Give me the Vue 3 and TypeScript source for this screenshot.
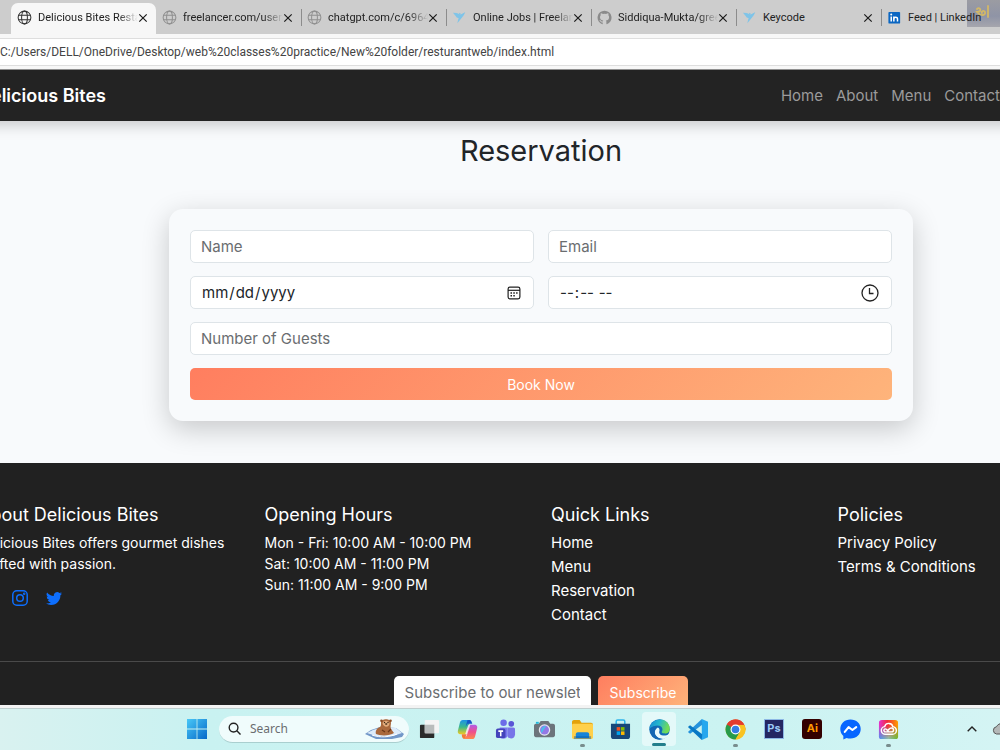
<script setup lang="ts">
import { ref } from 'vue'

interface Tab {
  title: string
  icon: 'globe' | 'bird' | 'github' | 'linkedin'
  closable: boolean
}

const tabs: Tab[] = [
  { title: 'Delicious Bites Resta', icon: 'globe', closable: true },
  { title: 'freelancer.com/users', icon: 'globe', closable: true },
  { title: 'chatgpt.com/c/69646', icon: 'globe', closable: true },
  { title: 'Online Jobs | Freelan', icon: 'bird', closable: true },
  { title: 'Siddiqua-Mukta/gree', icon: 'github', closable: true },
  { title: 'Keycode', icon: 'bird', closable: true },
  { title: 'Feed | LinkedIn', icon: 'linkedin', closable: false },
]

const navLinks = ['Home', 'About', 'Menu', 'Contact']
const quickLinks = ['Home', 'Menu', 'Reservation', 'Contact']
const policies = ['Privacy Policy', 'Terms & Conditions']
const hours = ['Mon - Fri: 10:00 AM - 10:00 PM', 'Sat: 10:00 AM - 11:00 PM', 'Sun: 11:00 AM - 9:00 PM']

const activeTab = ref(0)
const name = ref('')
const email = ref('')
const date = ref('')
const time = ref('')
const guests = ref('')
const newsletter = ref('')
const search = ref('')
</script>

<template>
  <div class="desktop">
    <header class="browser">
      <div class="tabs">
        <div class="keyboard-widget">
          <svg viewBox="0 0 16 16" fill="none" stroke="#d3b866" stroke-width="1.8" stroke-linecap="round">
            <path d="M2 5c2-2 4 0 3 2-1 1-3 1-3 1 4 5 9 3 8 0-1-2-4-1-3 1M13 2v11" />
          </svg>
        </div>
        <div v-for="(tab, i) in tabs" :key="i" class="tab" :class="{ active: i === activeTab, ruled: i > 1 }">
          <button class="tab-main" type="button" @click="activeTab = i">
            <svg v-if="tab.icon === 'globe'" class="fav" viewBox="0 0 16 16" fill="none" stroke="currentColor" stroke-width="1.1">
              <circle cx="8" cy="8" r="6.8" /><ellipse cx="8" cy="8" rx="3.1" ry="6.8" /><path d="M1.7 5.6h12.6M1.7 10.4h12.6" />
            </svg>
            <svg v-else-if="tab.icon === 'bird'" class="fav" viewBox="0 0 16 16" fill="#7fc4e8">
              <path d="M1 3l4 .3 2.6 3.2L5.2 8zM7.3 3l2 .8-.7 2.5zM14 2.5l-1.3 2.8-2 2.6-5 6.1 1-4.3L9.3 5z" /><path d="M5 3.300l4.300 1.700 4.700-2.500-6 6.500-2.800-1z" />
            </svg>
            <svg v-else-if="tab.icon === 'github'" class="fav" viewBox="0 0 16 16" fill="#8b8b8b">
              <path d="M8 .7a7.4 7.4 0 0 0-2.4 14.4c.4.1.5-.2.5-.4v-1.5c-2 .4-2.6-.9-2.7-1.4-.2-.3-.5-.8-.8-1 .7-.3 1.4.2 1.8.9.5.8 1.2.7 1.8.5.1-.5.3-.8.5-1-1.8-.2-3.5-.9-3.5-3.6 0-.9.3-1.6.8-2.1-.1-.3-.3-1 .1-2 0 0 .8-.2 2.1.8a7 7 0 0 1 3.7 0c1.3-1 2.1-.8 2.1-.8.4 1 .2 1.7.1 2 .5.5.8 1.2.8 2.1 0 2.7-1.7 3.4-3.5 3.6.4.3.6.8.6 1.5v2c0 .2.1.5.5.4A7.4 7.4 0 0 0 8 .7z" />
            </svg>
            <svg v-else class="fav" viewBox="0 0 16 16">
              <rect x="1.5" y="2" width="12.5" height="12.5" rx="1" fill="#0a66c2" />
              <path d="M4.5 7v5.2M7.3 7v5.2M7.3 9.6c0-2.4 3.9-2.6 3.9 0v2.6" stroke="#fff" stroke-width="1.6" fill="none" />
              <circle cx="4.5" cy="4.7" r="1.1" fill="#fff" />
            </svg>
            <span class="tab-title" :class="{ faded: tab.title.length > 15 }">{{ tab.title }}</span>
          </button>
          <button v-if="tab.closable" class="close" type="button" aria-label="Close tab">
            <svg viewBox="0 0 10 10" stroke="#1a1a1a" stroke-width="1.2"><path d="M1.3 1.3l7.4 7.4M8.7 1.3L1.3 8.7" /></svg>
          </button>
        </div>
      </div>
      <div class="address">C:/Users/DELL/OneDrive/Desktop/web%20classes%20practice/New%20folder/resturantweb/index.html</div>
    </header>

    <main class="viewport">
      <div class="site">
        <nav class="navbar">
          <a class="brand" href="#home">Delicious Bites</a>
          <div class="nav-links">
            <a v-for="link in navLinks" :key="link" :href="'#' + link.toLowerCase()">{{ link }}</a>
          </div>
        </nav>

        <section class="reservation">
          <h2>Reservation</h2>
          <form class="card" @submit.prevent>
            <input v-model="name" type="text" placeholder="Name" aria-label="Name">
            <input v-model="email" type="email" placeholder="Email" aria-label="Email">
            <div class="picker">
              <input v-model="date" type="date" aria-label="Date">
              <svg class="picker-icon calendar" viewBox="0 0 14 14" fill="none" stroke="#222" stroke-width="1.2">
                <rect x="1.100" y="1.100" width="11.800" height="11.800" rx="1.800" /><path d="M1 4.300h12" />
                <path d="M3.500 7h1.500M6.300 7h1.500M9.100 7h1.500M3.500 9.700h1.500M6.300 9.700h1.500" stroke-width="1.500" />
              </svg>
            </div>
            <div class="picker">
              <input v-model="time" type="time" aria-label="Time">
              <svg class="picker-icon clock" viewBox="0 0 18 18" fill="none" stroke="#222" stroke-width="1.3">
                <circle cx="9" cy="9" r="8" /><path d="M8.500 4v5.500h4" />
              </svg>
            </div>
            <input v-model="guests" class="wide" type="number" placeholder="Number of Guests" aria-label="Number of Guests">
            <button class="accent wide" type="submit">Book Now</button>
          </form>
        </section>

        <footer class="footer">
          <div class="columns">
            <div>
              <h5>About Delicious Bites</h5>
              <p>Delicious Bites offers gourmet dishes<br>crafted with passion.</p>
              <div class="social">
                <a href="#instagram" aria-label="Instagram">
                  <svg viewBox="0 0 16 16" fill="none" stroke="#0d6efd" stroke-width="1.500">
                    <rect x=".8" y=".8" width="14.400" height="14.400" rx="4" /><circle cx="8" cy="8" r="3.300" /><circle cx="12.200" cy="3.800" r=".5" />
                  </svg>
                </a>
                <a href="#twitter" aria-label="Twitter">
                  <svg viewBox="0 0 16 16" fill="#0d6efd">
                    <path d="M5.026 15c6.038 0 9.341-5.003 9.341-9.334q.002-.211-.006-.422A6.700 6.700 0 0 0 16 3.542a6.700 6.700 0 0 1-1.889.518 3.300 3.300 0 0 0 1.447-1.817 6.500 6.500 0 0 1-2.087.793A3.286 3.286 0 0 0 7.875 6.030a9.320 9.320 0 0 1-6.767-3.429 3.290 3.290 0 0 0 1.018 4.382A3.300 3.300 0 0 1 .64 6.575v.045a3.290 3.290 0 0 0 2.632 3.218 3.200 3.200 0 0 1-.865.115 3 3 0 0 1-.614-.057 3.280 3.280 0 0 0 3.067 2.277A6.600 6.600 0 0 1 .78 13.580a6 6 0 0 1-.78-.045A9.340 9.340 0 0 0 5.026 15" />
                  </svg>
                </a>
              </div>
            </div>
            <div>
              <h5>Opening Hours</h5>
              <p><template v-for="h in hours" :key="h">{{ h }}<br></template></p>
            </div>
            <div>
              <h5>Quick Links</h5>
              <ul><li v-for="l in quickLinks" :key="l"><a :href="'#' + l.toLowerCase()">{{ l }}</a></li></ul>
            </div>
            <div>
              <h5>Policies</h5>
              <ul><li v-for="l in policies" :key="l"><a href="#policies">{{ l }}</a></li></ul>
            </div>
          </div>
          <form class="newsletter" @submit.prevent>
            <input v-model="newsletter" type="email" placeholder="Subscribe to our newsletter" aria-label="Newsletter email">
            <button class="accent" type="submit">Subscribe</button>
          </form>
        </footer>
      </div>
    </main>

    <div class="taskbar">
      <button class="start" type="button" aria-label="Start">
        <svg viewBox="0 0 20 20"><defs><linearGradient id="win" x1="0" y1="0" x2="1" y2="1"><stop offset="0" stop-color="#49c8f7" /><stop offset="1" stop-color="#0669c9" /></linearGradient></defs>
          <path d="M0 0h9.600v9.600H0zM10.400 0H20v9.600h-9.600zM0 10.400h9.600V20H0zM10.400 10.400H20V20h-9.600z" fill="url(#win)" /></svg>
      </button>
      <label class="search">
        <svg class="lens" viewBox="0 0 14 14" fill="none" stroke="#222" stroke-width="1.500"><circle cx="6" cy="6" r="4.700" /><path d="M9.500 9.500l4 4" /></svg>
        <input v-model="search" type="text" placeholder="Search" aria-label="Search">
        <svg class="otter" viewBox="0 0 42 22">
          <path d="M1 16l6-4 9-3 16 1 8 6-2 3-10 2H12z" fill="#7297c8" />
          <path d="M3 15l6-3 10-3 13 1 6 5-9 3H12z" fill="#dcebfa" />
          <path d="M12 16c-1-3 1-6 4-7 1-1 1-2 1-4 0-5 10-5 10 0 0 2-1 3 0 6l3 4c-4 3-14 3-18 1z" fill="#a9683c" />
          <circle cx="17.500" cy="2.800" r="1.300" fill="#8b4c25" /><circle cx="26.500" cy="2.800" r="1.300" fill="#8b4c25" />
          <path d="M18.500 5c1-3 6-3 7 0 0 5-6 5-7 0z" fill="#e3ac7c" />
          <circle cx="20.500" cy="4.500" r=".7" fill="#321" /><circle cx="24" cy="4.500" r=".7" fill="#321" /><ellipse cx="22.200" cy="6" rx="1.200" ry=".8" fill="#321" />
          <path d="M18 12l3 2M27 11l-3 3" stroke="#6b3718" stroke-width="1.200" />
          <path d="M8 17c8 3 18 2 25-1" stroke="#fff" fill="none" />
        </svg>
      </label>
      <div class="apps">
        <button type="button" aria-label="Task view">
          <svg viewBox="0 0 22 22"><rect x="1" y="6" width="15" height="14" rx="1" fill="#2b2b2b" /><rect x="6" y="1" width="15" height="14" rx="1" fill="#f4f4f4" /><path d="M6 6h10v9H6z" fill="#b9bcbc" /></svg>
        </button>
        <button type="button" aria-label="Copilot">
          <svg viewBox="0 0 22 22"><defs>
            <linearGradient id="cpa" x1="0" y1="0" x2="0" y2="1"><stop offset="0" stop-color="#1a92e8" /><stop offset=".5" stop-color="#3cb98b" /><stop offset="1" stop-color="#f3ca21" /></linearGradient>
            <linearGradient id="cpb" x1="0" y1="0" x2="0" y2="1"><stop offset="0" stop-color="#b05ce8" /><stop offset=".5" stop-color="#ee4f8d" /><stop offset="1" stop-color="#ff8b4a" /></linearGradient></defs>
            <path d="M6 1h8L9.500 16H4c-3 0-3.500-2-3-4L3 4c.5-2 1.500-3 3-3z" fill="url(#cpa)" /><path d="M11 1h2c2 0 2.500 2 3 4h-5l-2 3z" fill="#1558c7" />
            <path d="M16 21H8l4.500-15H18c3 0 3.500 2 3 4l-2 8c-.5 2-1.500 3-3 3z" fill="url(#cpb)" /><path d="M10 11l2-5h2l-4 12H8z" fill="#fff" opacity=".75" /><path d="M7 16h3l-2 5c-2 0-3-2-3-5z" fill="#f37b35" /></svg>
        </button>
        <button type="button" aria-label="Teams">
          <svg viewBox="0 0 22 22"><circle cx="9" cy="4" r="3.400" fill="#6c6ce8" /><circle cx="17" cy="5" r="3" fill="#5a55d6" /><path d="M5 9h8v8c0 5-9 5-9 0z" fill="#7b78f0" /><path d="M13 9h6c2 0 2 1 2 3v4c0 5-6 6-8 2z" fill="#7774e8" /><rect x="1" y="10" width="10" height="10" rx="2" fill="#4443bb" /><path d="M3.500 12.700h5M6 12.700V18" stroke="#fff" stroke-width="1.600" /></svg>
        </button>
        <button type="button" aria-label="Camera">
          <svg viewBox="0 0 22 22"><path d="M7 2h8l2 3h3c1 0 2 1 2 2v10c0 1-1 2-2 2H2c-1 0-2-1-2-2V7c0-1 1-2 2-2h3z" fill="#6c747b" /><path d="M2 3h3v2H2z" fill="#22b8dc" /><circle cx="11" cy="11.500" r="6" fill="#e5e8f2" /><circle cx="11" cy="11.500" r="4.700" fill="#9478e5" /><path d="M8 15c-2-5 1-8 5-8z" fill="#4fb9ec" /></svg>
        </button>
        <button class="running" type="button" aria-label="File Explorer">
          <svg viewBox="0 0 22 22"><path d="M0 3c0-1 1-2 2-2h6l2 3h10c1 0 2 1 2 2v4H0z" fill="#e3a20b" /><rect y="5" width="22" height="16" rx="1.500" fill="#ffd04a" /><path d="M4 20v-4c0-1 1-2 2-2h10c1 0 2 1 2 2v4z" fill="#1784d8" /><path d="M2 18h18v3H2z" fill="#0b5ca8" opacity=".5" /></svg>
        </button>
        <button type="button" aria-label="Microsoft Store">
          <svg viewBox="0 0 22 22"><path d="M6.500 6V2.500c0-1 .5-1.500 1.500-1.500h6c1 0 1.500.5 1.500 1.500V6" stroke="#2db4ec" stroke-width="1.600" fill="none" /><path d="M1 5h20v13c0 2-1 3-3 3H4c-2 0-3-1-3-3z" fill="#174779" /><path d="M7 8.500h3.700v3.700H7z" fill="#f25022" /><path d="M11.500 8.500h3.700v3.700h-3.700z" fill="#7fba00" /><path d="M7 13h3.700v3.700H7z" fill="#00a4ef" /><path d="M11.500 13h3.700v3.700h-3.700z" fill="#ffb900" /></svg>
        </button>
        <button class="current" type="button" aria-label="Microsoft Edge">
          <svg viewBox="0 0 22 22"><defs><linearGradient id="edge" x1="0" y1="0" x2="1" y2=".3"><stop offset="0" stop-color="#1684d5" /><stop offset=".5" stop-color="#24b7cd" /><stop offset="1" stop-color="#72dc55" /></linearGradient></defs>
            <circle cx="11" cy="11" r="10.700" fill="#126bb6" /><path d="M.4 10C2-2 21-3 21.700 10c.2 4-3 5.500-6 5-2-.3-3-1-2-2.500C16 7 8 4 .4 10z" fill="url(#edge)" /><path d="M9 9c-6 4-2 12 6 12 3-1 5-3 6-5-5 3-12 1-10-4 0-2-1-3-2-3z" fill="#e9fbfc" /><path d="M9 9c-6 4-3 11 5 12-8 2-14-4-12-11 2-3 6-3 7-1z" fill="#1467b3" /></svg>
        </button>
        <button type="button" aria-label="Visual Studio Code">
          <svg viewBox="0 0 22 22"><path d="M15.500 0L22 3v16l-6.500 3z" fill="#27a7ee" /><path d="M15.500 0L1 13.500l2.200 2L16 6z" fill="#2492dc" /><path d="M15.500 22L1 8.500l2.200-2L16 16z" fill="#0878c5" /></svg>
        </button>
        <button class="running" type="button" aria-label="Google Chrome">
          <svg viewBox="0 0 22 22"><circle cx="11" cy="11" r="10.500" fill="#f9c321" /><path d="M11 11H21.500A10.500 10.500 0 0 0 1.900 5.800l4.500 7.900z" fill="#e33b2e" /><path d="M1.900 5.800A10.500 10.500 0 0 0 11 21.500l4.600-7.900-4.600-2.600z" fill="#279b4b" /><path d="M11 6h9.200a10.500 10.500 0 0 1-9.200 15.500l4.600-7.900z" fill="#f9c321" /><path d="M1.900 5.800A10.500 10.500 0 0 1 20.200 6H11z" fill="#e33b2e" /><circle cx="11" cy="11" r="5.200" fill="#fff" /><circle cx="11" cy="11" r="4" fill="#357de4" /></svg>
        </button>
        <button type="button" aria-label="Photoshop"><span class="adobe ps">Ps</span></button>
        <button type="button" aria-label="Illustrator"><span class="adobe ai">Ai</span></button>
        <button type="button" aria-label="Messenger">
          <svg viewBox="0 0 22 22"><path d="M11 .5C4.800.5.300 4.800.300 10.600c0 3 1.200 5.500 3.200 7.200V21.500l3.400-1.600c1.300.4 2.600.6 4.100.6 6.200 0 10.700-4.200 10.700-10S17.200.5 11 .5z" fill="#0866ff" /><path d="M5 13.500l4-5 4 3 4-3" stroke="#fff" stroke-width="2.200" fill="none" stroke-linejoin="round" stroke-linecap="round" /></svg>
        </button>
        <button class="running" type="button" aria-label="Creative Cloud">
          <svg viewBox="0 0 22 22"><defs>
            <linearGradient id="cca" x1="0" y1="0" x2="1" y2="0"><stop offset="0" stop-color="#e433d1" /><stop offset=".45" stop-color="#f22b38" /><stop offset="1" stop-color="#ffa000" /></linearGradient>
            <linearGradient id="ccb" x1="0" y1="0" x2="1" y2="0"><stop offset="0" stop-color="#3b9af5" /><stop offset=".5" stop-color="#86cdb5" /><stop offset="1" stop-color="#55b932" /></linearGradient>
            <linearGradient id="ccm" x1="0" y1="0" x2="0" y2="1"><stop offset=".3" stop-color="#000" /><stop offset="1" stop-color="#fff" /></linearGradient>
            <mask id="ccmask"><rect width="22" height="22" fill="url(#ccm)" /></mask></defs>
            <rect x="1" y="1" width="20" height="20" rx="3" fill="url(#cca)" /><rect x="1" y="1" width="20" height="20" rx="3" fill="url(#ccb)" mask="url(#ccmask)" />
            <path d="M8 16a4 4 0 0 1-1-8c1-5 8-4 8.500 0a4 4 0 0 1-.5 8zM11 13l-2-2c-2-2-4 1-2 2.500h7c3 0 3-4 0-4-2 0-3 2-4 2.500" stroke="#fff" stroke-width="1.500" fill="none" /></svg>
        </button>
      </div>
      <div class="tray">
        <button type="button" aria-label="Show hidden icons"><svg class="chevron" viewBox="0 0 10 6" fill="none" stroke="#222" stroke-width="1.400"><path d="M.7 5.300L5 1l4.300 4.300" /></svg></button>
        <button type="button" aria-label="OneDrive"><svg class="cloud" viewBox="0 0 18 12"><path d="M4.500 11a3.700 3.700 0 0 1 0-7.300C7-1 13 0 13.500 4.500c5 0 4.500 6.500 0 6.500z" fill="#b4b8b8" stroke="#555" /></svg></button>
      </div>
    </div>
  </div>
</template>

<style>
body { margin: 0; overflow: hidden; }
</style>

<style scoped>
* { box-sizing: border-box; }
button, input { font: inherit; }
button { border: 0; padding: 0; background: none; color: inherit; }
a { color: inherit; text-decoration: none; }
svg { display: block; flex: none; }

.desktop { display: flex; flex-direction: column; height: 100vh; overflow: hidden; font-family: Inter, "Noto Sans", sans-serif; font-size: 14px; line-height: 21px; }

.browser { flex: none; background: #f7f7f7; font-family: Roboto, "Noto Sans", sans-serif; border-bottom: 1px solid #8f8f8f; }
.tabs { position: relative; display: flex; height: 34px; padding: 3px 0 0 11px; background: #cdcdcd; color: #222; overflow: hidden; }
.tab { display: flex; align-items: center; flex: 0 0 145px; min-width: 0; padding: 0 8px 2px 6px; position: relative; }
.tab.active { background: #f7f7f7; border-radius: 7px 7px 0 0; }
.tab.ruled::before { content: ""; position: absolute; left: 0; top: 6px; height: 17px; width: 1px; background: #8c8c8c; }
.tab-main { display: flex; align-items: center; gap: 6px; flex: 1; min-width: 0; font-size: 11px; line-height: 16px; }
.fav { width: 15px; height: 15px; color: #909090; }
.active .fav { color: #333; }
.tab-title { flex: 1; min-width: 0; text-align: left; white-space: nowrap; overflow: hidden; }
.faded { -webkit-mask-image: linear-gradient(90deg, #000 80%, transparent); mask-image: linear-gradient(90deg, #000 80%, transparent); }
.close svg { width: 10px; height: 10px; }
.keyboard-widget { position: absolute; right: 0; top: 0; width: 33px; height: 27px; padding: 4px 8px; background: linear-gradient(#9b9ca2, #8f94a6 60%, #a6a6ad); }
.keyboard-widget svg { width: 16px; height: 16px; }
.address { margin: 4px 0 3px; padding: 5px 0; border: 1px solid #dedede; border-width: 1px 0; background: #fff; font-size: 12px; line-height: 16px; color: #444; white-space: nowrap; }

.viewport { flex: 1; min-height: 0; overflow: hidden; background: #f8fafc; }
/* The site is wider than the visible part of the window on both sides. */
.site { margin: 0 -104px 0 -22px; }
.navbar { position: relative; display: flex; justify-content: space-between; align-items: center; height: 51px; padding: 0 104px 0 0; background: #232323; box-shadow: 0 4px 14px rgba(0, 0, 0, .2); }
.brand { font-size: 18px; font-weight: 600; color: #fff; }
.nav-links { display: flex; gap: 13px; color: #9b9b9b; font-size: 15px; }

.reservation { padding: 13px 191px 42px; color: #212529; }
h2 { margin: 0 0 41px; text-align: center; font-size: 29px; line-height: 34px; font-weight: 400; }
.card { display: grid; grid-template-columns: 1fr 1fr; gap: 13px 14px; padding: 21px; border-radius: 14px; background: #f8fafc; box-shadow: 0 8px 28px rgba(0, 0, 0, .2); }
.card input { width: 100%; height: 33px; padding: 5px 10px; border: 1px solid #dee4e8; border-radius: 5px; background: #fff; color: #212529; font-size: 15px; outline: none; display: block; }
.wide { grid-column: 1 / -1; }
input::placeholder { color: #6a6d70; opacity: 1; }
.picker { position: relative; }
.picker input::-webkit-calendar-picker-indicator { opacity: 0; }
.picker-icon { position: absolute; top: 50%; transform: translateY(-50%); pointer-events: none; }
.calendar { width: 14px; height: 14px; right: 13px; }
.clock { width: 18px; height: 18px; right: 13px; }
.accent { height: 32px; border-radius: 5px; color: #fff; background: linear-gradient(135deg, #ff7e5f, #feb47b); }

.footer { background: #212121; color: #fff; }
.columns { display: grid; grid-template-columns: repeat(4, 1fr); gap: 20px; padding: 41px 0 33px; border-bottom: 1px solid #4a4a4a; }
.columns > div { white-space: nowrap; }
h5 { margin: 0 0 6px; font-size: 18px; line-height: 22px; font-weight: 400; }
p { margin: 0; }
ul { margin: 0; padding: 0; list-style: none; font-size: 15px; }
li { line-height: 21px; margin-bottom: 3px; }
.social { display: flex; gap: 18px; margin: 16px 0 0 34px; }
.social svg { width: 16px; height: 16px; }
.newsletter { display: flex; justify-content: center; gap: 7px; padding: 14px 0 30px; }
.newsletter input { width: 197px; height: 33px; border: 0; border-radius: 5px; padding: 5px 11px; background: #fff; font-size: 15px; outline: none; }
.newsletter .accent { height: 33px; padding: 0 12px; }

.taskbar { flex: none; display: flex; align-items: center; height: 45px; padding: 0 0 0 187px; border-top: 3px solid #f3f3f3; background: linear-gradient(90deg, #d9f2f0, #c9f2f1 20%, #cbf3f2 75%, #d4f4f4); box-shadow: inset 0 1px #bfcfcf; }
.start svg { width: 20px; height: 20px; }
.search { display: flex; align-items: center; width: 190px; height: 27px; margin-left: 12px; padding: 0 3px 0 9px; border-radius: 14px; background: #f0fcfc; border-bottom: 1px solid #a9cfcf; font-family: "Noto Sans", sans-serif; font-size: 12px; }
.search input { flex: 1; min-width: 0; border: 0; padding: 0 9px; background: none; outline: none; }
.lens { width: 13px; height: 13px; }
.otter { width: 42px; height: 22px; }
.apps { display: flex; width: 498px; height: 34px; margin-left: 1px; }
.apps button { position: relative; flex: 1; display: flex; align-items: center; justify-content: center; }
.apps svg { width: 21px; height: 21px; }
.current::before { content: ""; position: absolute; inset: 0 2px; background: #e4f9f9; border-radius: 4px; }
.current svg { position: relative; }
.running::after, .current::after { content: ""; position: absolute; bottom: -1px; width: 5px; height: 3px; border-radius: 2px; background: #788d8d; }
.current::after { bottom: 0; width: 14px; background: #237f8c; }
.adobe { display: block; width: 20px; height: 20px; font-size: 11px; line-height: 19px; font-weight: 700; text-align: center; }
.ps { border: 1px solid #8db8e5; background: #242762; color: #9cc9f5; line-height: 17px; }
.ai { border-radius: 3px; background: #330000; color: #ff9a00; }
.tray { display: flex; align-items: center; gap: 15px; margin-left: auto; margin-right: -10px; }
.chevron { width: 10px; height: 6px; }
.cloud { width: 18px; height: 12px; }
</style>
